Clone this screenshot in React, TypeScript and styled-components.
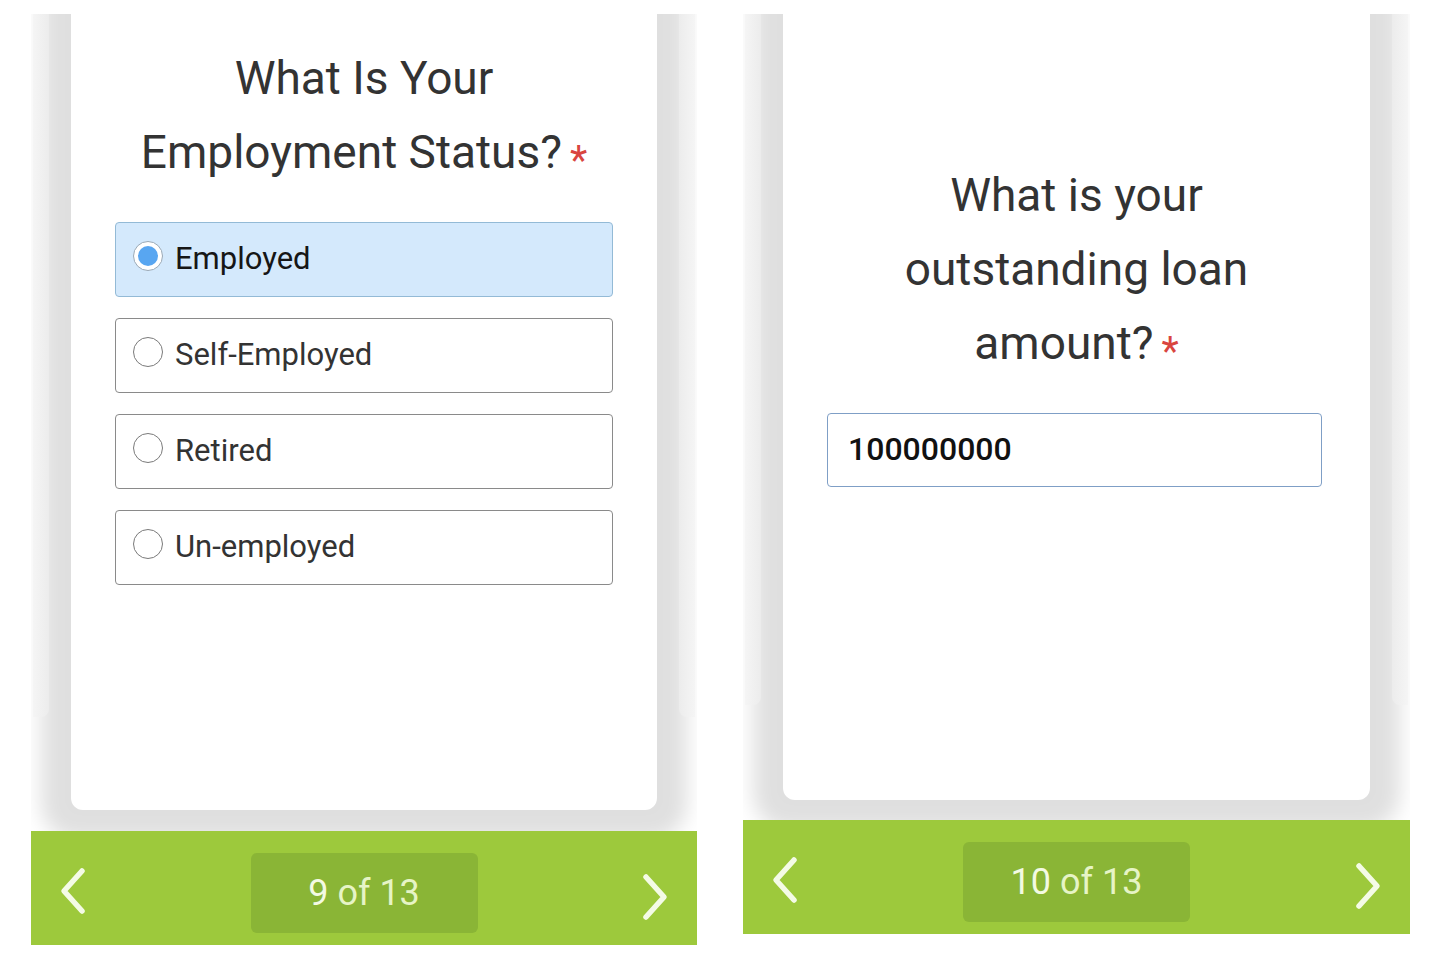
import { createGlobalStyle, styled } from "styled-components";

const GlobalStyle = createGlobalStyle`
  html, body {
    margin: 0;
    padding: 0;
    background: #ffffff;
  }
  body {
    font-family: Roboto, "Noto Sans", Arial, sans-serif;
    color: #333333;
  }
`;

type Side = "left" | "right";

const Chevron = ({ dir }: { dir: Side }) => (
  <svg width="30" height="48" viewBox="0 0 30 48" fill="none">
    <polyline
      points={dir === "left" ? "24,4 6,24 24,44" : "6,4 24,24 6,44"}
      stroke="#f4fbe6"
      strokeWidth="5.5"
      strokeLinecap="round"
      strokeLinejoin="round"
    />
  </svg>
);

const Radio = ({ checked }: { checked?: boolean }) => (
  <RadioRing $checked={checked}>{checked && <RadioDot />}</RadioRing>
);

const Pager = ({ current, total }: { current: number; total: number }) => (
  <NavBar>
    <Arrow $shift={-4}>
      <Chevron dir="left" />
    </Arrow>
    <Counter>
      <strong>{current}</strong> of {total}
    </Counter>
    <Arrow $shift={8}>
      <Chevron dir="right" />
    </Arrow>
  </NavBar>
);

const options = [
  { label: "Employed", checked: true },
  { label: "Self-Employed" },
  { label: "Retired" },
  { label: "Un-employed" },
];

export default function App() {
  return (
    <>
      <GlobalStyle />
      <Page>
        <Phone $width={666}>
          <Viewport $height={817}>
            <Peek $side="left" $height={703} />
            <Peek $side="right" $height={703} />
            <Card $height={796} $padTop={27}>
              <Question>
                What Is Your
                <br />
                Employment Status?<Required>*</Required>
              </Question>
              <OptionList>
                {options.map((o) => (
                  <Option key={o.label} $checked={o.checked}>
                    <Radio checked={o.checked} />
                    <OptionLabel $checked={o.checked}>{o.label}</OptionLabel>
                  </Option>
                ))}
              </OptionList>
            </Card>
          </Viewport>
          <Pager current={9} total={13} />
        </Phone>

        <Phone $width={667}>
          <Viewport $height={806}>
            <Peek $side="left" $height={691} />
            <Peek $side="right" $height={691} />
            <Card $height={786} $padTop={144}>
              <Question>
                What is your
                <br />
                outstanding loan
                <br />
                amount?<Required>*</Required>
              </Question>
              <AmountInput>100000000</AmountInput>
            </Card>
          </Viewport>
          <Pager current={10} total={13} />
        </Phone>
      </Page>
    </>
  );
}

const Page = styled.div`
  display: flex;
  gap: 46px;
  padding: 14px 0 0 31px;
  width: 1440px;
  height: 960px;
  box-sizing: border-box;
`;

const Phone = styled.div<{ $width: number }>`
  width: ${(p) => p.$width}px;
  display: flex;
  flex-direction: column;
`;

const Viewport = styled.div<{ $height: number }>`
  position: relative;
  height: ${(p) => p.$height}px;
  overflow: hidden;
  background: #ffffff;
  display: flex;
  flex-direction: column;
`;

const Peek = styled.div<{ $side: Side; $height: number }>`
  position: absolute;
  top: 0;
  ${(p) => (p.$side === "left" ? "left: 2px;" : "right: 2px;")}
  width: 16px;
  height: ${(p) => p.$height}px;
  z-index: 2;
  background: ${(p) =>
    p.$side === "left"
      ? "linear-gradient(to right, #f5f5f5, #ececec)"
      : "linear-gradient(to left, #f5f5f5, #ececec)"};
  border-radius: ${(p) => (p.$side === "left" ? "0 0 8px 0" : "0 0 0 8px")};
`;

const Card = styled.div<{ $height: number; $padTop: number }>`
  position: relative;
  z-index: 1;
  margin: 0 40px;
  height: ${(p) => p.$height}px;
  box-sizing: border-box;
  padding: ${(p) => p.$padTop}px 44px 0;
  background: #ffffff;
  border-radius: 0 0 12px 12px;
  box-shadow: 0 0 20px 30px rgba(0, 0, 0, 0.125);
  display: flex;
  flex-direction: column;
  gap: 33px;
`;

const Question = styled.h2`
  margin: 0;
  font-family: Roboto, "Noto Sans", Arial, sans-serif;
  font-weight: 400;
  font-size: 46px;
  line-height: 74px;
  text-align: center;
  color: #333333;
`;

const Required = styled.span`
  color: #d9453f;
  font-size: 40px;
  line-height: 1;
  margin-left: 8px;
  vertical-align: -6px;
`;

const OptionList = styled.div`
  display: flex;
  flex-direction: column;
  gap: 21px;
`;

const Option = styled.label<{ $checked?: boolean }>`
  display: flex;
  align-items: center;
  gap: 12px;
  height: 75px;
  box-sizing: border-box;
  padding: 0 0 2px 17px;
  border: 1.5px solid ${(p) => (p.$checked ? "#93bad6" : "#8a8a8a")};
  border-radius: 4px;
  background: ${(p) => (p.$checked ? "#d4e9fc" : "#ffffff")};
`;

const RadioRing = styled.span<{ $checked?: boolean }>`
  width: 30px;
  height: 30px;
  box-sizing: border-box;
  border-radius: 50%;
  border: 1.5px solid ${(p) => (p.$checked ? "#9aa9b6" : "#7a7a7a")};
  background: #ffffff;
  display: flex;
  align-items: center;
  justify-content: center;
  margin-top: -5px;
  flex: none;
`;

const RadioDot = styled.span`
  width: 20px;
  height: 20px;
  border-radius: 50%;
  background: #58a6f1;
`;

const OptionLabel = styled.span<{ $checked?: boolean }>`
  font-size: 31px;
  color: ${(p) => (p.$checked ? "#161616" : "#333333")};
`;

const AmountInput = styled.div`
  height: 74px;
  margin-right: 4px;
  box-sizing: border-box;
  border: 1.5px solid #7f9fc6;
  border-radius: 4px;
  padding: 0 20px 2px;
  display: flex;
  align-items: center;
  font-size: 32px;
  font-weight: 500;
  color: #111111;
`;

const NavBar = styled.div`
  height: 114px;
  background: #9dc93c;
  display: flex;
  align-items: center;
  justify-content: space-between;
  padding: 10px 27px 0;
  box-sizing: border-box;
`;

const Arrow = styled.div<{ $shift: number }>`
  display: flex;
  margin-top: ${(p) => p.$shift}px;
`;

const Counter = styled.div`
  width: 227px;
  height: 80px;
  border-radius: 6px;
  background: #8ab536;
  display: flex;
  align-items: center;
  justify-content: center;
  font-size: 36px;
  color: #e6f4c6;
  font-weight: 400;

  strong {
    font-weight: 400;
    color: #f3fae3;
    margin-right: 9px;
  }
`;
